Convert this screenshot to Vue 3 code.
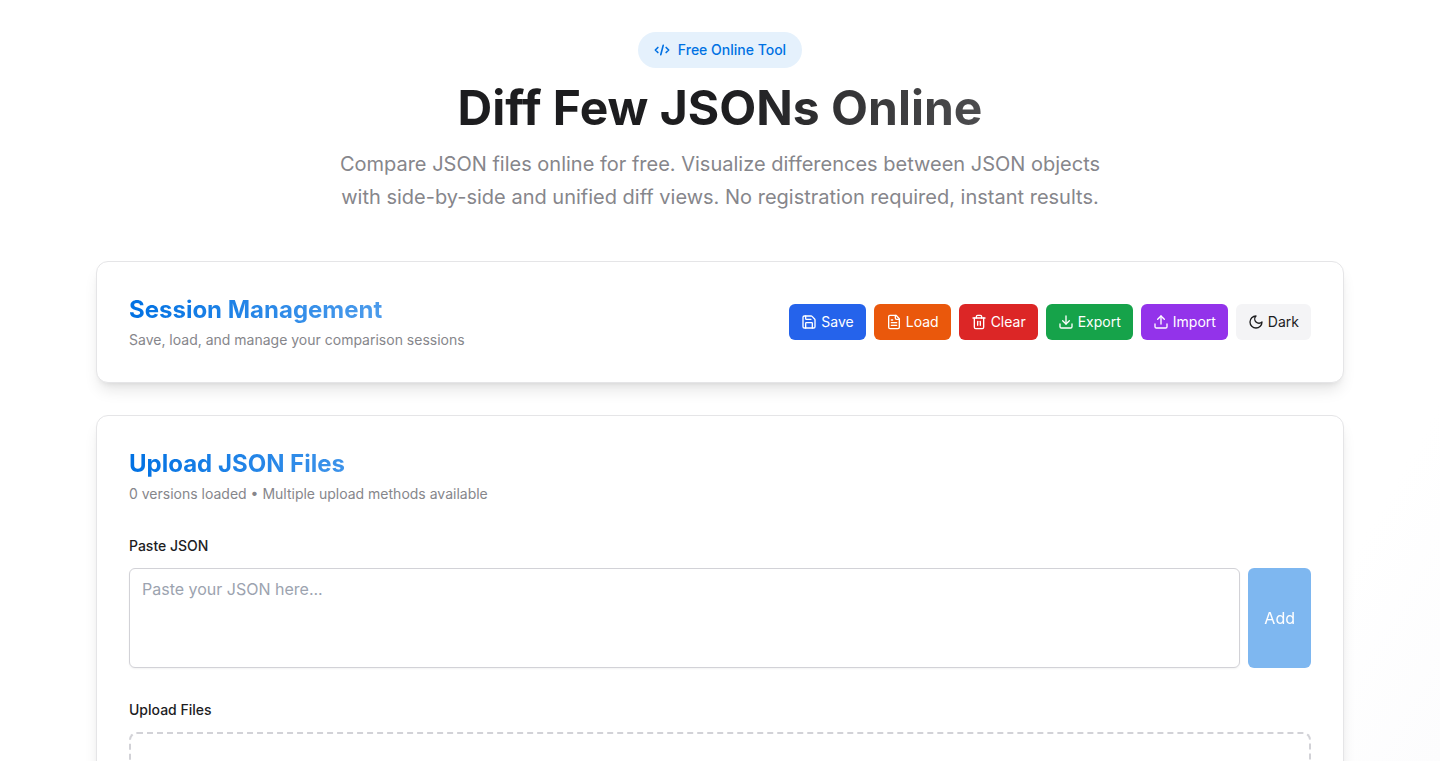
<script setup>
import { ref } from 'vue'

const json = ref('')

const actions = [
  { label: 'Save', tone: 'blue', paths: ['M15.2 3a2 2 0 0 1 1.4.6l3.8 3.8a2 2 0 0 1 .6 1.4V19a2 2 0 0 1-2 2H5a2 2 0 0 1-2-2V5a2 2 0 0 1 2-2z', 'M17 21v-7a1 1 0 0 0-1-1H8a1 1 0 0 0-1 1v7', 'M7 3v4a1 1 0 0 0 1 1h7'] },
  { label: 'Load', tone: 'orange', paths: ['M15 2H6a2 2 0 0 0-2 2v16a2 2 0 0 0 2 2h12a2 2 0 0 0 2-2V7Z', 'M14 2v4a2 2 0 0 0 2 2h4', 'M10 9H8', 'M16 13H8', 'M16 17H8'] },
  { label: 'Clear', tone: 'red', paths: ['M3 6h18', 'M19 6v14c0 1-1 2-2 2H7c-1 0-2-1-2-2V6', 'M8 6V4c0-1 1-2 2-2h4c1 0 2 1 2 2v2', 'M10 11v6', 'M14 11v6'] },
  { label: 'Export', tone: 'green', paths: ['M21 15v4a2 2 0 0 1-2 2H5a2 2 0 0 1-2-2v-4', 'm7 10 5 5 5-5', 'M12 15V3'] },
  { label: 'Import', tone: 'purple', paths: ['M21 15v4a2 2 0 0 1-2 2H5a2 2 0 0 1-2-2v-4', 'm17 8-5-5-5 5', 'M12 3v12'] },
  { label: 'Dark', tone: 'neutral', paths: ['M12 3a6 6 0 0 0 9 9 9 9 0 1 1-9-9Z'] },
]
</script>

<template>
  <div class="page">
    <main class="container">
      <header class="hero">
        <span class="badge">
          <svg class="icon code" viewBox="0 0 24 24" aria-hidden="true">
            <path d="m18.2 8.2 3.8 3.8-3.8 3.8" />
            <path d="m5.800 8.200-3.800 3.800 3.800 3.800" />
            <path d="m13.800 5-3.600 14" />
          </svg>
          Free Online Tool
        </span>
        <h1>Diff Few JSONs Online</h1>
        <p class="lead">
          Compare JSON files online for free. Visualize differences between JSON objects with
          side-by-side and unified diff views. No registration required, instant results.
        </p>
      </header>

      <section class="card session">
        <div class="heading">
          <h2>Session Management</h2>
          <p>Save, load, and manage your comparison sessions</p>
        </div>
        <div class="actions">
          <button v-for="a in actions" :key="a.label" type="button" class="btn" :class="a.tone">
            <svg class="icon" viewBox="0 0 24 24" aria-hidden="true">
              <path v-for="d in a.paths" :key="d" :d="d" />
            </svg>
            {{ a.label }}
          </button>
        </div>
      </section>

      <section class="card upload">
        <div class="heading">
          <h2>Upload JSON Files</h2>
          <p>0 versions loaded • Multiple upload methods available</p>
        </div>
        <div class="field">
          <label for="json-text">Paste JSON</label>
          <div class="paste">
            <textarea id="json-text" v-model="json" placeholder="Paste your JSON here..."></textarea>
            <button type="button" class="add" :disabled="!json">Add</button>
          </div>
        </div>
        <div class="field">
          <label for="json-files">Upload Files</label>
          <div class="dropzone">
            <input id="json-files" type="file" accept=".json" multiple />
          </div>
        </div>
      </section>
    </main>
  </div>
</template>

<style>
body {
  margin: 0;
}
</style>

<style scoped>
.page {
  box-sizing: border-box;
  height: 100vh;
  overflow: hidden;
  padding: 32px 96px;
  background: linear-gradient(120deg, #fff 89%, #fcfcfd 100%);
  color: #1d1d1f;
  font-family: Inter, "Liberation Sans", sans-serif;
}
.container {
  max-width: 1248px;
  margin: 0 auto;
  display: flex;
  flex-direction: column;
}
h1, h2, p {
  margin: 0;
}
.icon {
  width: 16px;
  height: 16px;
  flex: none;
  fill: none;
  stroke: currentColor;
  stroke-width: 2;
  stroke-linecap: round;
  stroke-linejoin: round;
}
.icon.code {
  stroke-width: 2.5;
}
.hero {
  display: flex;
  flex-direction: column;
  align-items: center;
  gap: 16px;
  margin-bottom: 47px;
  text-align: center;
}
.badge {
  display: inline-flex;
  align-items: center;
  gap: 8px;
  padding: 8px 16px;
  border-radius: 18px;
  background: #e5f1fc;
  color: #0071e3;
  font-size: 14px;
  line-height: 20px;
  font-weight: 500;
}
h1 {
  width: 100%;
  font-size: 48px;
  line-height: 48px;
  font-weight: 700;
  background: linear-gradient(to right, #1d1d1f 50%, #8e8e90);
  background-clip: text;
  color: transparent;
}
.lead {
  max-width: 768px;
  font-size: 20px;
  line-height: 33px;
  color: #86868b;
}
.card {
  padding: 32px;
  border: 1px solid #e5e5e7;
  border-radius: 12px;
  background: #fff;
  box-shadow: 0 10px 15px -3px rgba(0, 0, 0, 0.1), 0 4px 6px -4px rgba(0, 0, 0, 0.1);
}
.session {
  display: flex;
  align-items: center;
  justify-content: space-between;
  margin-bottom: 32px;
}
.heading {
  display: flex;
  flex-direction: column;
  gap: 4px;
  width: fit-content;
}
h2 {
  font-size: 24px;
  line-height: 32px;
  font-weight: 700;
  background: linear-gradient(to right, #0071e3, rgba(0, 113, 227, 0.6));
  background-clip: text;
  color: transparent;
}
.heading p {
  font-size: 14px;
  line-height: 20px;
  color: #86868b;
}
.actions {
  display: flex;
  gap: 8px;
}
button {
  border: 0;
  border-radius: 6px;
  font-family: inherit;
  color: #fff;
}
.btn {
  display: flex;
  align-items: center;
  gap: 4px;
  padding: 8px 12px;
  font-size: 14px;
  line-height: 20px;
}
.blue { background: #2563eb; }
.orange { background: #ea580c; }
.red { background: #dc2626; }
.green { background: #16a34a; }
.purple { background: #9333ea; }
.neutral { background: #f4f4f6; color: #1d1d1f; }
.upload {
  display: flex;
  flex-direction: column;
  gap: 32px;
}
.field {
  display: flex;
  flex-direction: column;
  gap: 12px;
}
label {
  font-size: 14px;
  line-height: 20px;
  font-weight: 500;
}
.paste {
  display: flex;
  gap: 8px;
}
textarea {
  box-sizing: border-box;
  flex: 1;
  height: 100px;
  margin: 0;
  padding: 8px 12px;
  border: 1px solid #d2d2d7;
  border-radius: 6px;
  background: #fff;
  box-shadow: 0 1px 2px rgba(0, 0, 0, 0.05);
  color: inherit;
  font-family: inherit;
  font-size: 16px;
  line-height: 24px;
  resize: none;
}
textarea::placeholder {
  color: #9ca3af;
}
.add {
  padding: 8px 16px;
  background: #0071e3;
  font-size: 16px;
  line-height: 24px;
}
.add:disabled {
  opacity: 0.5;
}
.dropzone {
  display: flex;
  min-height: 160px;
  border: 2px dashed #d2d2d7;
  border-radius: 8px;
}
.dropzone input {
  flex: 1;
  opacity: 0;
}
</style>
